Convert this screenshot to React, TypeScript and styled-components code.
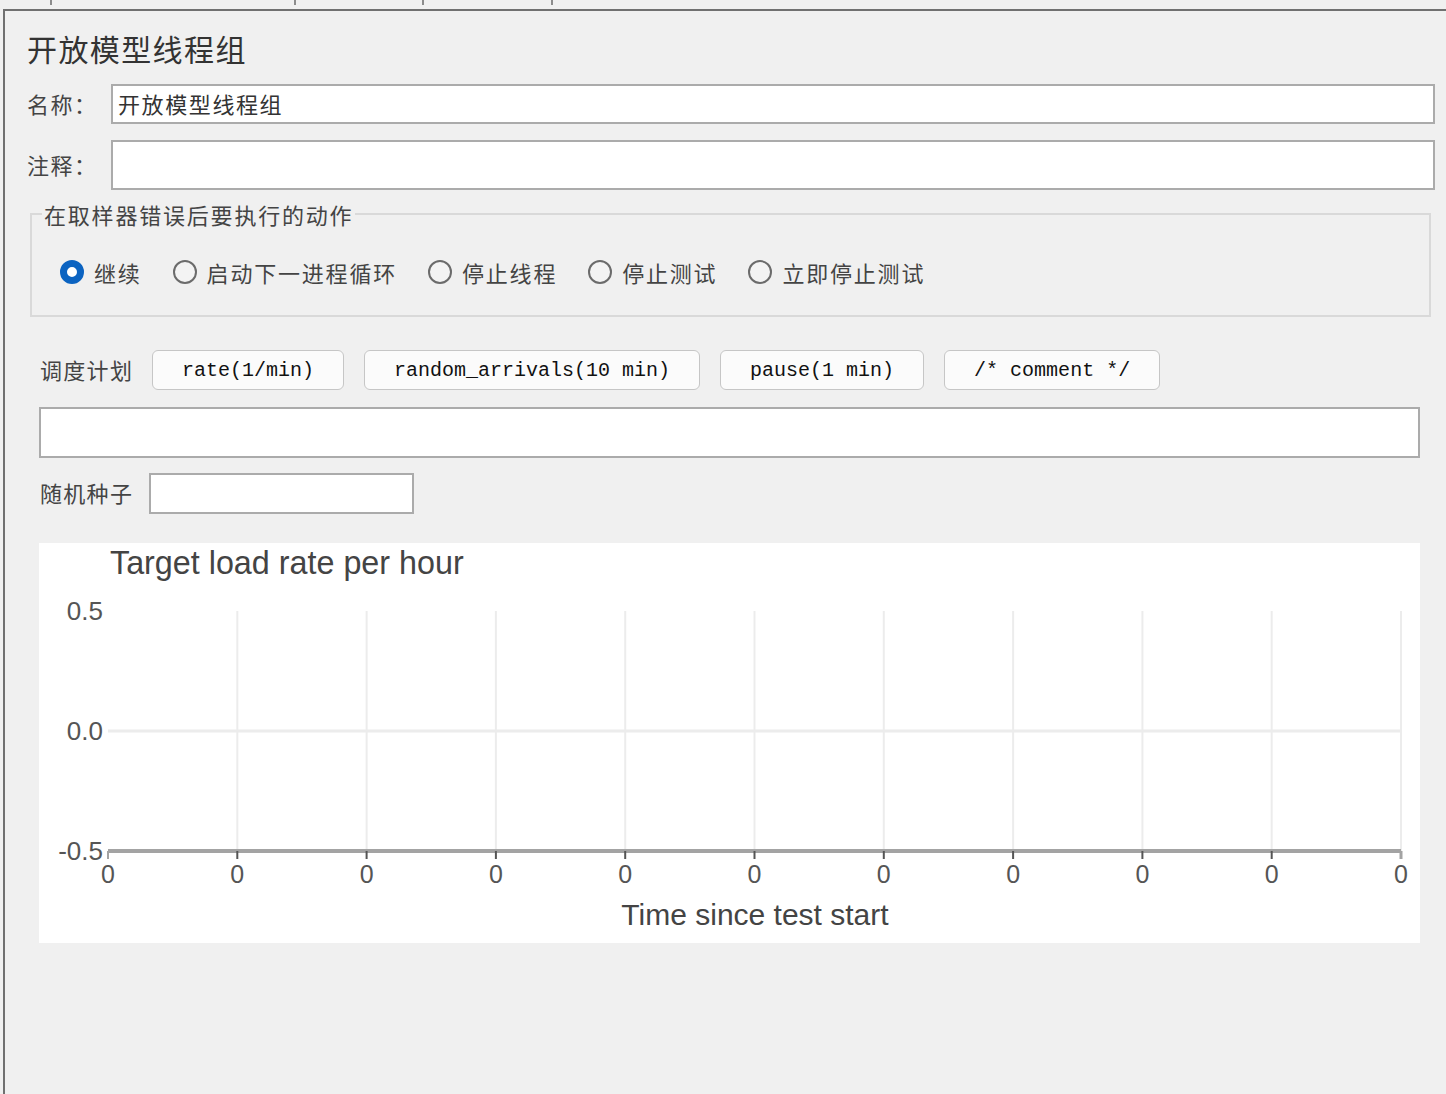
import React from "react";
import styled, { createGlobalStyle } from "styled-components";

const GlobalStyle = createGlobalStyle`
  html, body { margin: 0; padding: 0; background: #f0f0f0; }
  body {
    font-family: "Noto Sans CJK SC", "Liberation Sans", sans-serif;
    color: #3a3a3a;
  }
  * { box-sizing: border-box; }
`;

const Page = styled.div`
  width: 1446px;
  height: 1094px;
  overflow: hidden;
  background: #f0f0f0;
`;

const TabStrip = styled.div`
  display: flex;
  height: 9px;
`;

const TabStub = styled.div<{ $w: number }>`
  width: ${(p) => p.$w}px;
  height: 5px;
  border-right: 2px solid #8c8c8c;
`;

const Panel = styled.div`
  margin-left: 3px;
  height: 1085px;
  border-top: 2px solid #707070;
  border-left: 2px solid #707070;
  padding: 17px 11px 0 22px;
`;

const Title = styled.div`
  font-size: 30px;
  line-height: 40px;
  letter-spacing: 1.4px;
  color: #333;
`;

const FieldRow = styled.div<{ $gap: number }>`
  display: flex;
  align-items: center;
  margin-top: ${(p) => p.$gap}px;
`;

const FieldLabel = styled.label<{ $w: number }>`
  width: ${(p) => p.$w}px;
  flex: none;
  font-size: 22px;
  line-height: 26px;
  padding-bottom: 3px;
  letter-spacing: 1.5px;
  color: #444;
  white-space: nowrap;
`;

const TextInput = styled.input<{ $h: number; $w?: number }>`
  ${(p) => (p.$w ? `width: ${p.$w}px; flex: none;` : "flex: 1; min-width: 0;")}
  height: ${(p) => p.$h}px;
  border: 2px solid #ababab;
  background: #fff;
  padding: 0 5px 3px;
  font-family: "Noto Sans CJK SC", "Liberation Sans", sans-serif;
  font-size: 22px;
  letter-spacing: 1.6px;
  color: #333;
  outline: none;
`;

const Group = styled.fieldset`
  margin: 12px 4px 0 3px;
  padding: 0;
  border: 2px solid #d9d9d9;
  min-width: 0;
`;

const Legend = styled.legend`
  margin-left: 10px;
  padding: 0 2px;
  font-size: 22px;
  line-height: 24px;
  letter-spacing: 1.8px;
  color: #444;
`;

const RadioRow = styled.div`
  display: flex;
  align-items: center;
  gap: 31px;
  height: 30px;
  margin: 31px 0 28px 28px;
`;

const RadioItem = styled.label`
  display: flex;
  align-items: center;
  gap: 10px;
  font-size: 22px;
  letter-spacing: 1.8px;
  color: #444;
  white-space: nowrap;
`;

const RadioDot = styled.span<{ $on?: boolean }>`
  width: 24px;
  height: 24px;
  border-radius: 50%;
  flex: none;
  ${(p) =>
    p.$on
      ? `border: 7px solid #0b63c1; background: #fff;`
      : `border: 2px solid #6b6b6b; background: #f3f3f3;`}
`;

const Lower = styled.div`
  margin: 0 15px 0 12px;
`;

const ScheduleRow = styled.div`
  display: flex;
  align-items: center;
  gap: 20px;
  margin-top: 33px;
`;

const SectionLabel = styled.span<{ $w: number }>`
  width: ${(p) => p.$w}px;
  flex: none;
  padding-left: 1px;
  padding-bottom: 3px;
  font-size: 22px;
  letter-spacing: 1.3px;
  color: #444;
  white-space: nowrap;
`;

const SnippetButton = styled.button`
  height: 40px;
  padding: 0 29px;
  border: 1px solid #c6c6c6;
  border-radius: 6px;
  background: #fbfbfb;
  font-family: "Liberation Mono", monospace;
  font-size: 20px;
  color: #111;
  white-space: nowrap;
`;

const ScheduleBox = styled.div`
  margin-top: 17px;
  height: 51px;
  border: 2px solid #ababab;
  background: #fff;
`;

const SeedRow = styled.div`
  display: flex;
  align-items: center;
  margin-top: 15px;
`;

const ChartCard = styled.div`
  margin-top: 29px;
  height: 400px;
  background: #fff;
`;

const ChartSvg = styled.svg`
  display: block;
  font-family: "Liberation Sans", Arial, sans-serif;
`;

const radios = ["继续", "启动下一进程循环", "停止线程", "停止测试", "立即停止测试"];
const snippets = ["rate(1/min)", "random_arrivals(10 min)", "pause(1 min)", "/* comment */"];

const Chart: React.FC = () => {
  const x0 = 69;
  const x1 = 1362;
  const step = (x1 - x0) / 10;
  const xs = Array.from({ length: 11 }, (_, i) => x0 + i * step);
  return (
    <ChartSvg width="1381" height="400" viewBox="0 0 1381 400">
      <text x="71" y="31" fontSize="32.3" fill="#444">
        Target load rate per hour
      </text>
      {xs.slice(1).map((x, i) => (
        <line key={"g" + i} x1={x} y1={68} x2={x} y2={308} stroke="#ececec" strokeWidth="2" />
      ))}
      <line x1={x0} y1={188} x2={x1} y2={188} stroke="#ececec" strokeWidth="3" />
      <text x="64" y="77" fontSize="26" fill="#555" textAnchor="end">0.5</text>
      <text x="64" y="197" fontSize="26" fill="#555" textAnchor="end">0.0</text>
      <text x="64" y="317" fontSize="26" fill="#555" textAnchor="end">-0.5</text>
      <line x1={x0} y1={308} x2={x1} y2={308} stroke="#a3a3a3" strokeWidth="4" />
      {xs.map((x, i) => (
        <g key={"t" + i}>
          <line
            x1={x}
            y1={308}
            x2={x}
            y2={316}
            stroke={i === 0 || i === 10 ? "#a3a3a3" : "#555"}
            strokeWidth={i === 10 ? 3 : 2}
          />
          <text x={x} y={340} fontSize="25" fill="#555" textAnchor="middle">0</text>
        </g>
      ))}
      <text x="716" y="382" fontSize="30" fill="#444" textAnchor="middle">
        Time since test start
      </text>
    </ChartSvg>
  );
};

export default function App() {
  return (
    <Page>
      <GlobalStyle />
      <TabStrip>
        <TabStub $w={52} />
        <TabStub $w={244} />
        <TabStub $w={128} />
        <TabStub $w={129} />
      </TabStrip>
      <Panel>
        <Title>开放模型线程组</Title>
        <FieldRow $gap={16}>
          <FieldLabel $w={84}>名称：</FieldLabel>
          <TextInput $h={40} defaultValue="开放模型线程组" />
        </FieldRow>
        <FieldRow $gap={16}>
          <FieldLabel $w={84}>注释：</FieldLabel>
          <TextInput $h={50} defaultValue="" />
        </FieldRow>
        <Group>
          <Legend>在取样器错误后要执行的动作</Legend>
          <RadioRow>
            {radios.map((r, i) => (
              <RadioItem key={r}>
                <RadioDot $on={i === 0} />
                {r}
              </RadioItem>
            ))}
          </RadioRow>
        </Group>
        <Lower>
          <ScheduleRow>
            <SectionLabel $w={93}>调度计划</SectionLabel>
            {snippets.map((s) => (
              <SnippetButton key={s}>{s}</SnippetButton>
            ))}
          </ScheduleRow>
          <ScheduleBox />
          <SeedRow>
            <SectionLabel $w={110}>随机种子</SectionLabel>
            <TextInput $h={41} $w={265} defaultValue="" />
          </SeedRow>
          <ChartCard>
            <Chart />
          </ChartCard>
        </Lower>
      </Panel>
    </Page>
  );
}
